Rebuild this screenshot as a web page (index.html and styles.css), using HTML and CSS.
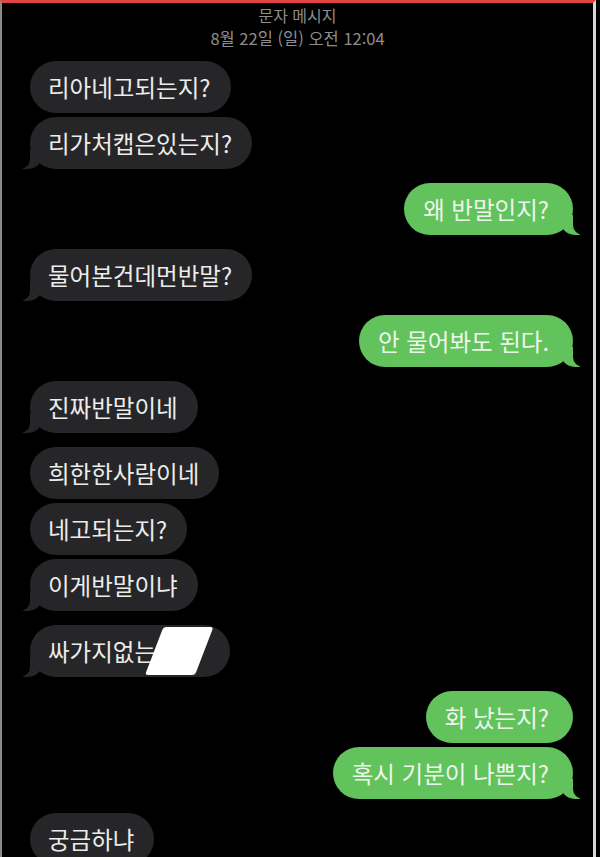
FILE: index.html
```html
<!DOCTYPE html>
<html lang="ko">
<head>
<meta charset="utf-8">
<title>문자 메시지</title>
<link rel="stylesheet" href="styles.css">
</head>
<body>
<div class="screen">
  <header class="head">
    <div class="head-title">문자 메시지</div>
    <div class="head-date">8월 22일 (일) 오전 12:04</div>
  </header>
  <main class="thread">
    <div class="group">
      <div class="bubble recv">리아네고되는지?</div>
      <div class="bubble recv tail">리가처캡은있는지?</div>
    </div>
    <div class="group">
      <div class="bubble sent tail">왜 반말인지?</div>
    </div>
    <div class="group">
      <div class="bubble recv tail">물어본건데먼반말?</div>
    </div>
    <div class="group">
      <div class="bubble sent tail">안 물어봐도 된다.</div>
    </div>
    <div class="group">
      <div class="bubble recv tail">진짜반말이네</div>
    </div>
    <div class="group">
      <div class="bubble recv">희한한사람이네</div>
      <div class="bubble recv">네고되는지?</div>
      <div class="bubble recv tail">이게반말이냐</div>
    </div>
    <div class="group">
      <div class="bubble recv tail redacted">싸가지없는<span class="gap"></span><span class="mask"></span></div>
    </div>
    <div class="group">
      <div class="bubble sent">화 났는지?</div>
      <div class="bubble sent tail">혹시 기분이 나쁜지?</div>
    </div>
    <div class="group">
      <div class="bubble recv">궁금하냐</div>
    </div>
  </main>
</div>
</body>
</html>
```

FILE: styles.css
```css
html, body {
  margin: 0;
  padding: 0;
  background: #000;
}

body {
  width: 600px;
  height: 857px;
  overflow: hidden;
  font-family: "Noto Sans CJK KR", "Noto Sans", sans-serif;
}

.screen {
  box-sizing: border-box;
  width: 596px;
  height: 857px;
  border-top: 3px solid #e04444;
  border-left: 2px solid #8a8a8a;
  border-right: 3px solid #d8d8d8;
  background: #000;
  overflow: hidden;
}

.head {
  display: flex;
  flex-direction: column;
  align-items: center;
  padding-top: 1px;
  color: #8e8e8e;
  font-size: 16px;
  line-height: 23px;
}

.head-date {
  font-size: 16.5px;
}

.thread {
  display: flex;
  flex-direction: column;
  gap: 14px;
  padding: 11px 20px 0 28px;
}

.group {
  display: flex;
  flex-direction: column;
  gap: 4px;
}

.bubble {
  position: relative;
  box-sizing: border-box;
  height: 52px;
  padding: 0 20px 0 18px;
  border-radius: 26px;
  font-size: 23.5px;
  line-height: 52px;
  white-space: nowrap;
}

.recv {
  align-self: flex-start;
  background: #262628;
  color: #ececec;
}

.sent {
  align-self: flex-end;
  padding: 0 24px 0 19px;
  background: #62c25c;
  color: #eef6ec;
}

.recv.tail::before {
  content: "";
  position: absolute;
  bottom: 0;
  left: -7px;
  width: 20px;
  height: 20px;
  background: #262628;
  border-bottom-right-radius: 15px;
}

.recv.tail::after {
  content: "";
  position: absolute;
  bottom: 0;
  left: -10px;
  width: 10px;
  height: 20px;
  background: #000;
  border-bottom-right-radius: 10px;
}

.sent.tail::before {
  content: "";
  position: absolute;
  bottom: 0;
  right: -7px;
  width: 20px;
  height: 20px;
  background: #62c25c;
  border-bottom-left-radius: 15px;
}

.sent.tail::after {
  content: "";
  position: absolute;
  bottom: 0;
  right: -10px;
  width: 10px;
  height: 20px;
  background: #000;
  border-bottom-left-radius: 10px;
}

.gap {
  display: inline-block;
  width: 54px;
}

.mask {
  position: absolute;
  left: 115px;
  top: 2px;
  width: 50px;
  height: 48px;
  background: #fff;
  transform: skewX(-21deg);
  transform-origin: bottom left;
  border-radius: 3px;
}
```
